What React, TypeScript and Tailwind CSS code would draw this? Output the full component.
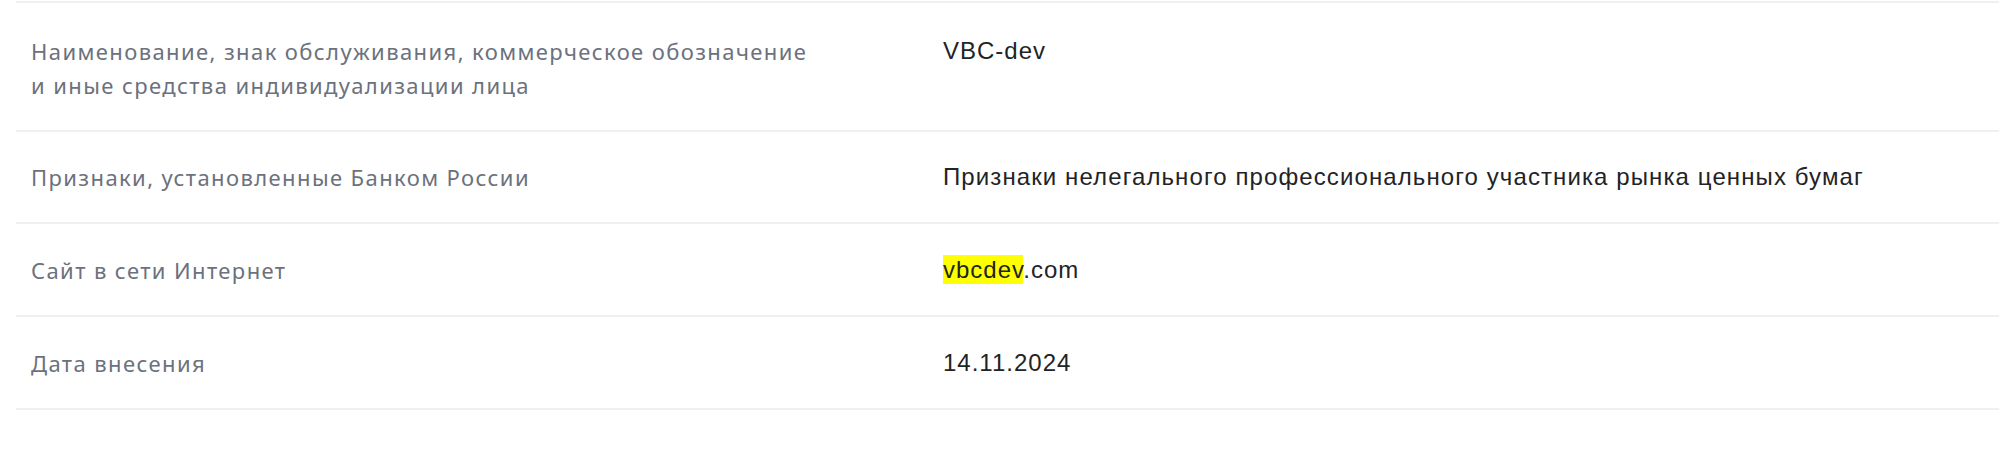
import React from "react";

const labelFont = { fontFamily: '"Noto Sans", "Open Sans", sans-serif' };

function Row({
  label,
  children,
  height,
  tall,
}: {
  label: React.ReactNode;
  children: React.ReactNode;
  height: string;
  tall?: boolean;
}) {
  return (
    <div
      className={`flex border-b-2 border-[#f0f0f2] ${height} ${
        tall ? "items-start pt-[31px]" : "items-center"
      }`}
    >
      <div
        className="w-[927px] shrink-0 pl-[15px] text-[22px] leading-[34px] tracking-[1.4px] text-[#6b717d]"
        style={labelFont}
      >
        {label}
      </div>
      <div className="flex-1 text-[24px] leading-[34px] tracking-[1.1px] text-[#222326] font-['Liberation_Sans',Arial,sans-serif]">
        {children}
      </div>
    </div>
  );
}

export default function App() {
  return (
    <div className="w-[1999px] h-[449px] bg-white pt-[1px] pl-[16px]">
      <div className="border-t-2 border-[#f0f0f2]">
        <Row
          tall
          height="h-[129px]"
          label={
            <>
              Наименование, знак обслуживания, коммерческое обозначение
              <br />и иные средства индивидуализации лица
            </>
          }
        >
          <span className="tracking-[1px]">VBC-dev</span>
        </Row>
        <Row height="h-[92px]" label="Признаки, установленные Банком России">
          Признаки нелегального профессионального участника рынка ценных бумаг
        </Row>
        <Row height="h-[93px]" label="Сайт в сети Интернет">
          <span className="tracking-[1px]">
            <span className="bg-[#ffff00] py-[1px]">vbcdev</span>.com
          </span>
        </Row>
        <Row height="h-[93px]" label="Дата внесения">
          <span className="tracking-[1px]">14.11.2024</span>
        </Row>
      </div>
    </div>
  );
}
